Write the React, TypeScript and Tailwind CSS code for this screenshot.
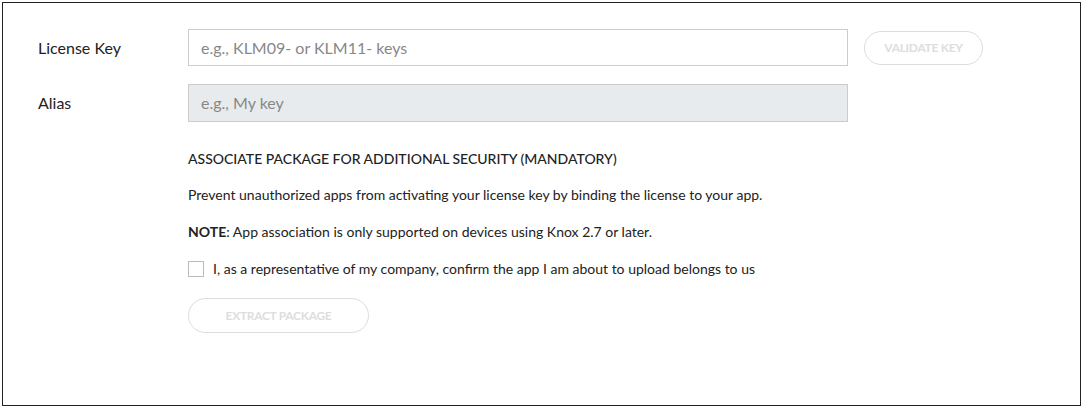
export default function App() {
  const font = { fontFamily: 'Lato, "Noto Sans", sans-serif' };
  return (
    <div className="w-[1084px] h-[409px] bg-white pt-[2px] pl-[2px]" style={font}>
      <div className="w-[1079px] h-[404px] border border-[#222] flex flex-col">
        <div className="flex items-center h-[37px] mt-[26px]">
          <div className="w-[185px] shrink-0 pl-[35px] text-[16px] text-[#222]">License Key</div>
          <div className="w-[660px] shrink-0 h-[37px] border border-[#ccc] bg-white flex items-center px-[12px] text-[16px] text-[#888]">
            e.g., KLM09- or KLM11- keys
          </div>
          <button className="ml-[16px] shrink-0 w-[119px] h-[34px] rounded-full border border-[#ddd] text-[12px] font-bold text-[#ddd] tracking-tight">
            VALIDATE KEY
          </button>
        </div>
        <div className="flex items-center h-[38px] mt-[18px]">
          <div className="w-[185px] shrink-0 pl-[35px] text-[16px] text-[#222]">Alias</div>
          <div className="w-[660px] shrink-0 h-[38px] border border-[#ccc] bg-[#e8ebee] flex items-center px-[12px] text-[16px] text-[#888]">
            e.g., My key
          </div>
        </div>
        <div className="pl-[185px] flex flex-col text-[14px] text-[#222]">
          <div className="mt-[27px] h-[20px] leading-[20px] font-medium">ASSOCIATE PACKAGE FOR ADDITIONAL SECURITY (MANDATORY)</div>
          <div className="mt-[16px] h-[20px] leading-[20px]">Prevent unauthorized apps from activating your license key by binding the license to your app.</div>
          <div className="mt-[17px] h-[20px] leading-[20px]">
            <span className="font-bold">NOTE</span>: App association is only supported on devices using Knox 2.7 or later.
          </div>
          <div className="mt-[17px] h-[20px] flex items-center">
            <div className="w-[16px] h-[16px] border border-[#bbb] bg-white" />
            <div className="ml-[9px] leading-[20px]">I, as a representative of my company, confirm the app I am about to upload belongs to us</div>
          </div>
          <button className="mt-[19px] w-[181px] h-[35px] rounded-full border border-[#ddd] text-[12px] font-bold text-[#ddd] tracking-tight">
            EXTRACT PACKAGE
          </button>
        </div>
      </div>
    </div>
  );
}
